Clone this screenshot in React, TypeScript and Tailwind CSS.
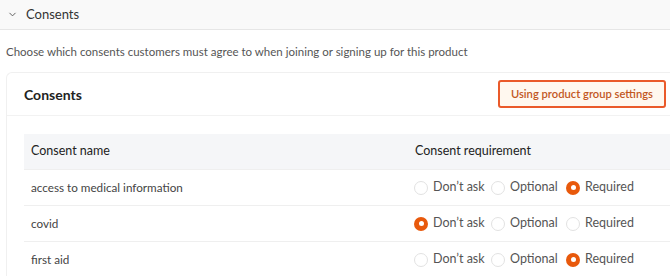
import { ChevronDown } from "lucide-react"

type Choice = "dont" | "optional" | "required"

const rows: { name: string; value: Choice }[] = [
    { name: "access to medical information", value: "required" },
    { name: "covid", value: "dont" },
    { name: "first aid", value: "required" },
]

const options: { key: Choice; label: string }[] = [
    { key: "dont", label: "Don\u2019t ask" },
    { key: "optional", label: "Optional" },
    { key: "required", label: "Required" },
]

const Radio = ({ checked, label, width }: { checked: boolean; label: string; width: string }) => {
    return (
        <label className={"flex items-center gap-[5px] " + width}>
            {checked ? (
                <span className="flex h-[14px] w-[14px] shrink-0 items-center justify-center rounded-full bg-[#e8590c]">
                    <span className="h-[5px] w-[5px] rounded-full bg-white" />
                </span>
            ) : (
                <span className="h-[14px] w-[14px] shrink-0 rounded-full border border-[#e2e2e2] bg-white" />
            )}
            <span>{label}</span>
        </label>
    )
}

const widths: Record<Choice, string> = {
    dont: "w-[77px]",
    optional: "w-[75px]",
    required: "w-[80px]",
}

export default function App() {
    return (
        <div className="w-[670px] h-[276px] overflow-hidden bg-white font-['Lato',sans-serif] text-[#333]">
            <div className="flex h-[30px] items-center gap-[8px] border-b border-[#e6e6e6] bg-[#f9f9f9] pl-[7px]">
                <ChevronDown className="h-[11px] w-[11px] text-[#555]" strokeWidth={2} />
                <span className="text-[13px] text-[#333]">Consents</span>
            </div>
            <p className="mt-[12px] pl-[6px] text-[11.5px] leading-[19px] text-[#555]">
                Choose which consents customers must agree to when joining or signing up for this product
            </p>
            <div className="ml-[6px] mt-[11px] rounded-tl-md border-l border-t border-[#f0f0f0]">
                <div className="flex h-[43px] items-center justify-between border-b border-[#f2f2f2] pl-[17px] pr-[4px]">
                    <h2 className="text-[14px] font-bold text-[#222]">Consents</h2>
                    <span className="rounded-[3px] border-2 border-[#ea5a2a] bg-[#fff8ef] px-[11px] py-[4px] text-[11.2px] font-semibold text-[#c2571e]">
                        Using product group settings
                    </span>
                </div>
                <div className="pl-[17px] pt-[18px]">
                    <div className="flex h-[35px] items-center bg-[#f5f6f8] text-[12.5px] text-[#222]">
                        <div className="w-[391px] pl-[7px]">Consent name</div>
                        <div>Consent requirement</div>
                    </div>
                    {rows.map((row) => (
                        <div key={row.name} className="flex h-[36px] items-center border-t border-[#efefef] text-[12.5px] text-[#444]">
                            <div className="w-[390px] pl-[7px] text-[11.7px]">{row.name}</div>
                            <div className="flex items-center text-[#555]">
                                {options.map((o) => (
                                    <Radio key={o.key} checked={row.value === o.key} label={o.label} width={widths[o.key]} />
                                ))}
                            </div>
                        </div>
                    ))}
                </div>
            </div>
        </div>
    )
}
